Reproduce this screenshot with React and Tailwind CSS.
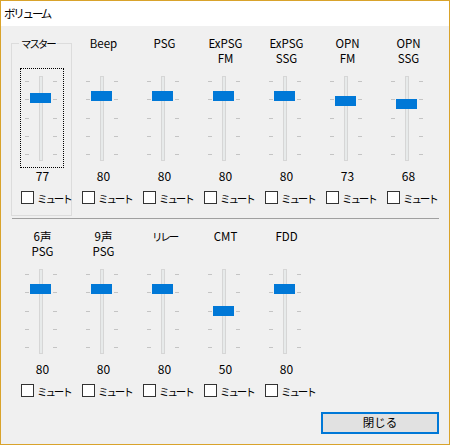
import React from "react";

const TOP = [
  { label: ["マスター"], value: 77, master: true },
  { label: ["Beep"], value: 80 },
  { label: ["PSG"], value: 80 },
  { label: ["ExPSG", "FM"], value: 80 },
  { label: ["ExPSG", "SSG"], value: 80 },
  { label: ["OPN", "FM"], value: 73 },
  { label: ["OPN", "SSG"], value: 68 },
];

const BOTTOM = [
  { label: ["6声", "PSG"], value: 80 },
  { label: ["9声", "PSG"], value: 80 },
  { label: ["リレー"], value: 80, kana: true },
  { label: ["CMT"], value: 50 },
  { label: ["FDD"], value: 80 },
];

function Kana({ children }) {
  return <span className="text-[10.5px] tracking-[-2.1px]">{children}</span>;
}

function Slider({ value, focused }) {
  // thumb centre: bottom tick at 86px, top tick at 13px
  const top = 86 - value * 0.73 - 5;
  return (
    <div className="relative ml-[8px] h-[100px] w-[44px]">
      {focused && (
        <div className="absolute inset-0 border border-dotted border-black" />
      )}
      <div className="absolute left-[19px] top-[8px] h-[85px] w-[4px] border border-[#d6d6d6] bg-[#e7eaea]" />
      <div className="absolute left-[5px] top-[13px] flex h-[74px] flex-col justify-between">
        {[0, 1, 2, 3, 4].map((i) => (
          <div key={i} className="h-px w-[4px] bg-[#c4c4c4]" />
        ))}
      </div>
      <div className="absolute left-[33px] top-[13px] flex h-[74px] flex-col justify-between">
        {[0, 1, 2, 3, 4].map((i) => (
          <div key={i} className="h-px w-[4px] bg-[#c4c4c4]" />
        ))}
      </div>
      <div
        className="absolute left-[10px] h-[10px] w-[21px] bg-[#0078d7]"
        style={{ top: Math.round(top) }}
      />
    </div>
  );
}

function Mute() {
  return (
    <div className="mt-[8px] flex h-[13px] items-center pl-[9px]">
      <div className="h-[13px] w-[13px] border border-[#333333] bg-white" />
      <span className="ml-[3px] leading-[13px]">
        <Kana>ミュート</Kana>
      </span>
    </div>
  );
}

function Channel({ ch }) {
  return (
    <div className="relative flex w-[61px] flex-col">
      {ch.master && (
        <div className="absolute -bottom-[12px] -left-px right-px top-[7px] border border-[#dcdcdc]" />
      )}
      <div className="relative flex h-[32px] flex-col text-[11.5px] leading-[15px]">
        {ch.master ? (
          <div className="ml-[7px] self-start bg-[#f0f0f0] px-[2px]">
            <Kana>{ch.label[0]}</Kana>
          </div>
        ) : (
          ch.label.map((l) => (
            <div key={l} className="h-[15px] text-center">
              {ch.kana ? <Kana>{l}</Kana> : l}
            </div>
          ))
        )}
      </div>
      <div className="relative">
        <Slider value={ch.value} focused={ch.master} />
      </div>
      <div className="relative h-[15px] text-center leading-[15px]">
        {ch.value}
      </div>
      <div className="relative">
        <Mute />
      </div>
    </div>
  );
}

export default function App() {
  return (
    <div className="h-[445px] w-[450px] border border-[#d9a32b] bg-[#f0f0f0] font-['Noto_Sans_CJK_JP',sans-serif] text-[12px] text-black">
      <div className="flex h-[25px] items-center bg-white pl-[3px]">
        <span className="text-[11.5px] tracking-[-2.2px]">ボリューム</span>
      </div>
      <div className="flex flex-col pl-[11px] pr-[10px] pt-[10px]">
        <div className="flex">
          {TOP.map((ch) => (
            <Channel key={ch.label.join()} ch={ch} />
          ))}
        </div>
        <div className="mt-[14px] h-px bg-[#a0a0a0]" />
        <div className="mt-[10px] flex">
          {BOTTOM.map((ch) => (
            <Channel key={ch.label.join()} ch={ch} />
          ))}
        </div>
        <div className="mt-[15px] flex justify-end">
          <button className="flex h-[22px] w-[118px] items-center justify-center border-2 border-[#0078d7] bg-[#e1e1e1] text-[11.5px]">
            閉じる
          </button>
        </div>
      </div>
    </div>
  );
}
